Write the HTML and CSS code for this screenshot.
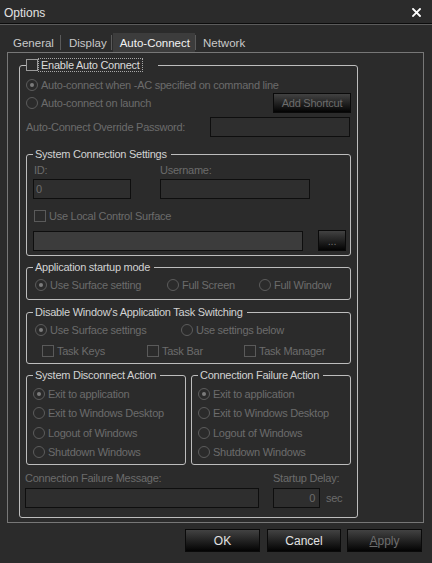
FILE: index.html
```html
<!DOCTYPE html>
<html>
<head>
<meta charset="utf-8">
<title>Options</title>
<link rel="stylesheet" href="styles.css">
</head>
<body>
<div class="window">
  <div class="titlebar">
    <span class="title">Options</span>
    <svg class="close" width="9" height="9" viewBox="0 0 9 9"><path d="M1 1L8 8M8 1L1 8" stroke="#ffffff" stroke-width="1.8" stroke-linecap="square"/></svg>
  </div>
  <div class="tabs">
    <div class="tab t-general">General</div>
    <div class="tab-sep"></div>
    <div class="tab t-display">Display</div>
    <div class="tab-sep"></div>
    <div class="tab active">Auto-Connect</div>
    <div class="tab-sep"></div>
    <div class="tab t-network">Network</div>
  </div>
  <div class="panel">
    <fieldset class="group outer">
      <legend class="outer-legend"><span class="check enabled"></span><span class="focus">Enable Auto Connect</span></legend>
      <div class="row r1"><span class="opt"><span class="radio on"></span>Auto-connect when -AC specified on command line</span></div>
      <div class="row r2"><span class="opt"><span class="radio"></span>Auto-connect on launch</span><span class="btn shortcut">Add Shortcut</span></div>
      <div class="row r3"><span class="lbl">Auto-Connect Override Password:</span><span class="input pw"></span></div>

      <fieldset class="group scs">
        <legend>System Connection Settings</legend>
        <div class="id-grid">
          <span class="lbl ind">ID:</span><span class="lbl">Username:</span>
          <span class="input idbox">0</span><span class="input"></span>
        </div>
        <div class="row chk-row"><span class="opt"><span class="check"></span>Use Local Control Surface</span></div>
        <div class="row path-row"><span class="input path"></span><span class="btn dots">...</span></div>
      </fieldset>

      <fieldset class="group asm">
        <legend>Application startup mode</legend>
        <div class="grid3 mode-row">
          <span class="opt"><span class="radio on"></span>Use Surface setting</span>
          <span class="opt"><span class="radio"></span>Full Screen</span>
          <span class="opt"><span class="radio"></span>Full Window</span>
        </div>
      </fieldset>

      <fieldset class="group dwats">
        <legend>Disable Window's Application Task Switching</legend>
        <div class="grid2 sw-row">
          <span class="opt"><span class="radio on"></span>Use Surface settings</span>
          <span class="opt"><span class="radio"></span>Use settings below</span>
        </div>
        <div class="grid3 task-row">
          <span class="opt"><span class="check"></span>Task Keys</span>
          <span class="opt"><span class="check"></span>Task Bar</span>
          <span class="opt"><span class="check"></span>Task Manager</span>
        </div>
      </fieldset>

      <div class="actions">
        <fieldset class="group act">
          <legend>System Disconnect Action</legend>
          <div class="act-list">
            <span class="opt"><span class="radio on"></span>Exit to application</span>
            <span class="opt"><span class="radio"></span>Exit to Windows Desktop</span>
            <span class="opt"><span class="radio"></span>Logout of Windows</span>
            <span class="opt"><span class="radio"></span>Shutdown Windows</span>
          </div>
        </fieldset>
        <fieldset class="group act">
          <legend>Connection Failure Action</legend>
          <div class="act-list">
            <span class="opt"><span class="radio on"></span>Exit to application</span>
            <span class="opt"><span class="radio"></span>Exit to Windows Desktop</span>
            <span class="opt"><span class="radio"></span>Logout of Windows</span>
            <span class="opt"><span class="radio"></span>Shutdown Windows</span>
          </div>
        </fieldset>
      </div>

      <div class="bottom">
        <div class="msg-col">
          <span class="lbl">Connection Failure Message:</span>
          <span class="input msg"></span>
        </div>
        <div class="delay-col">
          <span class="lbl">Startup Delay:</span>
          <div class="delay-row"><span class="input delay">0</span><span class="sec">sec</span></div>
        </div>
      </div>
    </fieldset>
  </div>
  <div class="buttons">
    <span class="btn big ok b-ok">OK</span>
    <span class="btn big ok b-cancel">Cancel</span>
    <span class="btn big apply"><u>A</u>pply</span>
  </div>
</div>
</body>
</html>
```

FILE: styles.css
```css
* { box-sizing: border-box; }
html, body { margin: 0; padding: 0; }
body {
  background: #2b2b2b;
  width: 432px;
  height: 563px;
  overflow: hidden;
  font-family: "Liberation Sans", Arial, sans-serif;
  font-size: 11px;
  letter-spacing: -0.25px;
  color: #6c6c6c;
}
.window { width: 432px; height: 563px; }

.titlebar {
  height: 24px;
  border-bottom: 1px solid #0c0c0c;
  display: flex;
  align-items: center;
  justify-content: space-between;
  padding: 2px 11px 0 4px;
}
.title { font-size: 12px; letter-spacing: 0; color: #e2e2e2; }
.close { display: block; }

.tabs {
  border-top: 1px solid #5c5c5c;
  height: 28px;
  display: flex;
  align-items: flex-end;
  padding-left: 7px;
}
.tab {
  height: 19px;
  display: flex;
  align-items: center;
  font-size: 11.5px;
  letter-spacing: 0;
  color: #c9c9c9;
  padding: 0 6px;
}
.t-display { padding: 0 4px 0 8px; }
.t-network { padding: 0 6px 0 7px; }
.tab.active { background: #3c3c3c; color: #f2f2f2; padding: 0 5px 0 7px; margin-left: 1px; }
.tab-sep { width: 1px; height: 15px; background: #5a5a5a; margin-bottom: 2px; }

.panel {
  margin-left: 7px;
  width: 417px;
  height: 471px;
  border: 1px solid #777777;
  padding: 5px 0 0 11px;
}

.group {
  margin: 0;
  min-width: 0;
  border: 1px solid #bdbdbd;
  border-radius: 3px;
  padding: 0 4px 0 6px;
}
.group legend {
  padding: 0 4px 0 2px;
  line-height: 14px;
  color: #d2d2d2;
}

.outer { width: 339px; height: 460px; padding: 0 6px; }
.group .outer-legend {
  display: flex;
  align-items: center;
  padding: 0 15px 0 0;
}
.focus {
  border: 1px dotted #a8a8a8;
  line-height: 12px;
  padding: 0 2px;
  color: #dcdcdc;
}

.row { display: flex; align-items: center; }
.r1 { height: 16px; margin-top: 5px; }
.r2 { height: 20px; justify-content: space-between; }
.r3 { height: 20px; margin-top: 4px; justify-content: space-between; }
.pw { width: 140px; height: 20px; margin-right: 1px; }

.opt { display: flex; align-items: center; gap: 3px; white-space: nowrap; }
.radio {
  width: 12px; height: 12px;
  border: 1px solid #5c5c5c;
  border-radius: 50%;
  display: flex; align-items: center; justify-content: center;
  flex: none;
}
.radio.on::after {
  content: "";
  width: 4px; height: 4px;
  border-radius: 50%;
  background: #7c7c7c;
}
.check {
  width: 12px; height: 12px;
  border: 1px solid #5a5a5a;
  flex: none;
}
.check.enabled { border-color: #9a9a9a; }

.input {
  display: flex;
  align-items: center;
  height: 20px;
  border: 1px solid #0e0e0e;
  background: #2e2e2e;
  padding: 0 2px;
}
.btn {
  display: flex;
  align-items: center;
  justify-content: center;
  border: 1px solid #0a0a0a;
  background: linear-gradient(#424242, #030303);
  color: #6c6c6c;
}
.shortcut { width: 78px; height: 20px; }

.scs { margin-top: 10px; width: 325px; padding: 0 4px 4px 6px; }
.id-grid {
  margin-top: 2px;
  display: grid;
  grid-template-columns: 98px 150px;
  grid-template-rows: 14px 20px;
  column-gap: 29px;
  row-gap: 2px;
  align-items: center;
}
.ind { padding-left: 1px; }
.chk-row { margin-top: 10px; height: 14px; padding-left: 1px; }
.path-row { margin-top: 7px; height: 21px; justify-content: space-between; }
.path { width: 270px; background: #3c3c3c; }
.dots { width: 28px; height: 21px; }

.asm { margin-top: 4px; width: 325px; padding: 0 4px 6px 6px; }
.grid3, .grid2 { display: grid; align-items: center; height: 16px; }
.mode-row { margin-top: 3px; margin-left: 2px; grid-template-columns: 132px 92px auto; }

.dwats { margin-top: 5px; width: 325px; padding: 0 4px 4px 6px; }
.sw-row { margin-top: 3px; margin-left: 2px; grid-template-columns: 146px auto; }
.task-row { margin-top: 5px; margin-left: 9px; grid-template-columns: 105px 97px auto; }

.actions { margin-top: 4px; display: flex; gap: 5px; }
.act { width: 160px; padding: 0 4px 2px 6px; }
.act-list { margin-top: 2px; display: grid; grid-auto-rows: 19.5px; align-items: center; }

.bottom { margin-top: 6px; margin-left: -1px; display: flex; gap: 14px; }
.msg-col, .delay-col { display: grid; grid-template-rows: 14px 20px; row-gap: 3px; align-items: center; }
.msg { width: 234px; }
.delay-row { display: flex; align-items: center; }
.delay { width: 47px; justify-content: flex-end; padding-right: 4px; }
.sec { margin-left: 6px; }

.buttons {
  margin-top: 6px;
  height: 23px;
  display: flex;
  justify-content: flex-end;
  gap: 6px;
  padding-right: 10px;
}
.big { width: 75px; height: 23px; font-size: 12px; letter-spacing: 0; }
.b-ok { margin-right: 1px; }
.b-cancel { width: 74px; }
.ok { color: #e2e2e2; }
.apply { color: #6e6e6e; }
```
